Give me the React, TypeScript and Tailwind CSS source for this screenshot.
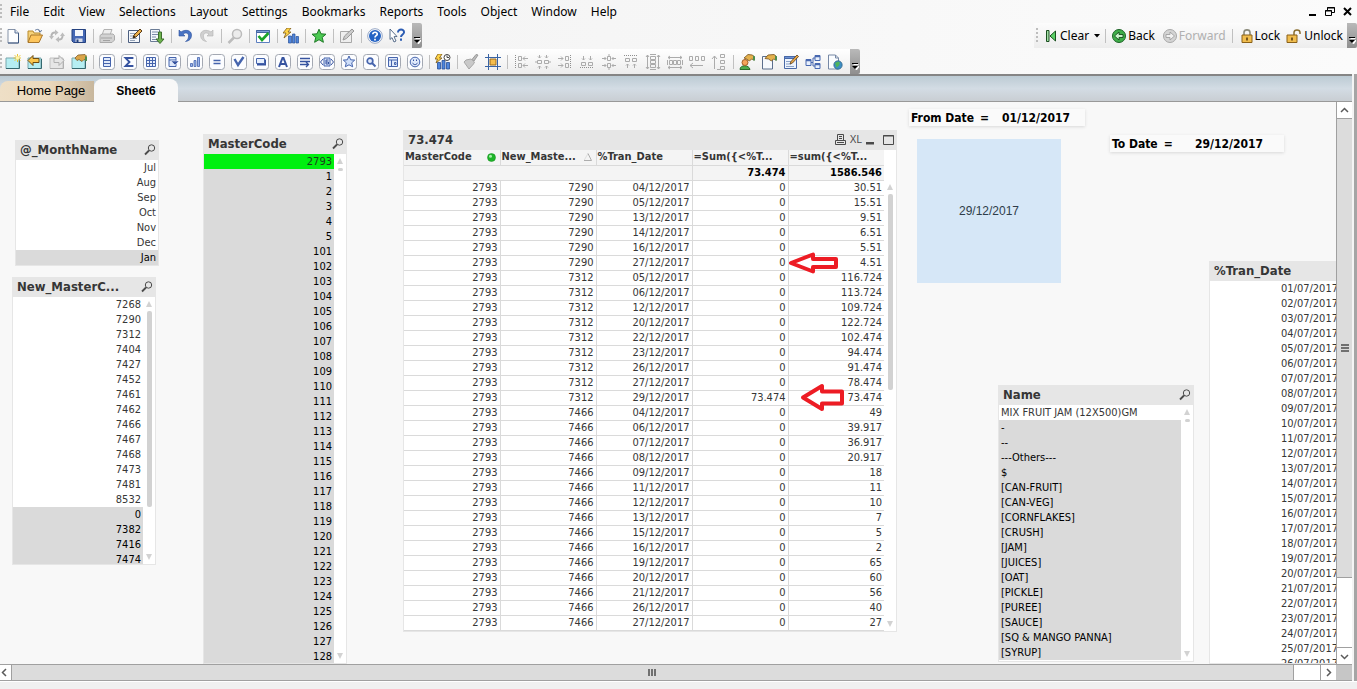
import type { ReactNode } from "react"

const menuItems = [
  "File",
  "Edit",
  "View",
  "Selections",
  "Layout",
  "Settings",
  "Bookmarks",
  "Reports",
  "Tools",
  "Object",
  "Window",
  "Help",
]

const mainGroups = [
  ["new", "open", "refresh", "save"],
  ["print"],
  ["script", "reload"],
  ["undo", "redo"],
  ["search"],
  ["current"],
  ["quickchart"],
  ["star"],
  ["note"],
  ["help", "whatsthis"],
]

const designGroups = [
  ["addsheet", "sheetleft", "sheetright", "sheetprops"],
  [
    "listbox",
    "statistics",
    "table",
    "multibox",
    "chart",
    "input",
    "selections",
    "button",
    "text",
    "line",
    "slider",
    "bookmark",
    "searchobject",
    "container",
    "custom",
  ],
  ["timechart"],
  ["brush", "grid"],
  [
    "alignleft",
    "centerh",
    "alignright",
    "alignbottom",
    "centerv",
    "aligntop",
    "spaceh",
    "spacev",
    "adjustleft",
    "adjusttop",
  ],
  ["userprefs", "docprops", "editscript", "tableviewer", "webview"],
]

const months = ["Jul", "Aug", "Sep", "Oct", "Nov", "Dec", "Jan"]

const newMasterCodes = [
  "7268", "7290", "7312", "7404", "7427", "7452", "7461", "7462", "7466",
  "7467", "7468", "7473", "7481", "8532", "0", "7382", "7416", "7474",
]

const masterCodes = [
  "2793", "1", "2", "3", "4", "5",
  ...Array.from({ length: 28 }, (_, i) => String(101 + i)),
]

const names = [
  "MIX FRUIT JAM (12X500)GM", "-", "--", "---Others---", "$", "[CAN-FRUIT]", "[CAN-VEG]", "[CORNFLAKES]",
  "[CRUSH]", "[JAM]", "[JUICES]", "[OAT]", "[PICKLE]", "[PUREE]", "[SAUCE]", "[SQ & MANGO PANNA]", "[SYRUP]",
]

const tranDates = Array.from({ length: 26 }, (_, i) => `${String(i + 1).padStart(2, "0")}/07/2017`)

const columns = ["MasterCode", "New_Maste...", "%Tran_Date", "=Sum({<%T...", "=sum({<%T..."]

const tableRows = [
  ["7290", "04", "0", "30.51"],
  ["7290", "05", "0", "15.51"],
  ["7290", "13", "0", "9.51"],
  ["7290", "14", "0", "6.51"],
  ["7290", "16", "0", "5.51"],
  ["7290", "27", "0", "4.51"],
  ["7312", "05", "0", "116.724"],
  ["7312", "06", "0", "113.724"],
  ["7312", "12", "0", "109.724"],
  ["7312", "20", "0", "122.724"],
  ["7312", "22", "0", "102.474"],
  ["7312", "23", "0", "94.474"],
  ["7312", "26", "0", "91.474"],
  ["7312", "27", "0", "78.474"],
  ["7312", "29", "73.474", "73.474"],
  ["7466", "04", "0", "49"],
  ["7466", "06", "0", "39.917"],
  ["7466", "07", "0", "36.917"],
  ["7466", "08", "0", "20.917"],
  ["7466", "09", "0", "18"],
  ["7466", "11", "0", "11"],
  ["7466", "12", "0", "10"],
  ["7466", "13", "0", "7"],
  ["7466", "15", "0", "5"],
  ["7466", "16", "0", "2"],
  ["7466", "19", "0", "65"],
  ["7466", "20", "0", "60"],
  ["7466", "21", "0", "56"],
  ["7466", "26", "0", "40"],
  ["7466", "27", "0", "27"],
]

const starPath = "M8 1.2l2 4.6 5 .4-3.8 3.2 1.2 4.9L8 11.7l-4.4 2.6 1.2-4.9L1 6.2l5-.4z"

// Blue sheet-object glyphs share the same rounded frame
function Framed({ children }: { children: ReactNode }) {
  return (
    <>
      <rect x="0.5" y="0.5" width="15" height="15" rx="3" fill="#fcfdff" stroke="#a3a8b2" />
      {children}
    </>
  )
}

function Page({ dim = false }: { dim?: boolean }) {
  return (
    <>
      <path d="M1 4h13v10.5H1z" fill={dim ? "#e6e6e6" : "#b5eef2"} stroke={dim ? "#c0c0c0" : "#7aa7ad"} />
      <path d="M1 14.5h13.5V5" fill="none" stroke={dim ? "#b0b0b0" : "#35686f"} />
    </>
  )
}

const icons: Record<string, ReactNode> = {
  new: (
    <>
      <path d="M3 1.5h7l3.500 3.500v10H3z" fill="#fdfeff" stroke="#8693a8" />
      <path d="M3 15h10.500V5" fill="none" stroke="#3c5780" />
      <path d="M10 1.500V5h3.500" fill="#dfe8f4" stroke="#5c7397" />
    </>
  ),
  open: (
    <>
      <path d="M1 14V3h5l1 2h6v3" fill="#f5d27a" stroke="#b98a2d" />
      <path d="M1 14.500L4 7h11.500L12 14.500z" fill="#fdc55c" stroke="#a8762a" />
      <path d="M8 2.500c2-2 5-1 5 1M11.500 2.500l1.700 1.700 1.500-2" fill="none" stroke="#5c7397" />
    </>
  ),
  refresh: (
    <g fill="none" stroke="#b4b4b4" strokeWidth="2">
      <path d="M2.500 9C2 5.500 4 4 7 4.500" />
      <path d="M13.500 7c.5 3.500-1.500 5-4.500 4.500" />
      <path d="M6 1.500v6l3.500-3zM10 8.500v6L6.500 11.500z" fill="#bdbdbd" stroke="none" />
      <path d="M0 8h5l-2.500 3.500zM11 8h5l-2.500-3.500z" fill="#bdbdbd" stroke="none" />
    </g>
  ),
  save: (
    <>
      <path d="M1 1.500h13.500v13H2.500L1 13z" fill="#4467b4" stroke="#25427f" />
      <path d="M4 2h8v6H4z" fill="#f3f6fb" />
      <path d="M4.500 10.500h7V14h-7z" fill="#d5dbe8" />
      <path d="M5.500 11.500h2V14h-2z" fill="#25427f" />
    </>
  ),
  print: (
    <>
      <path d="M5 1.500h8L11 7H3z" fill="#ededed" stroke="#b2b2b2" />
      <path d="M1 7.500L3 6h11l1.500 1.500V12L13 14.500H1z" fill="#d2d2d2" stroke="#aaa" />
      <path d="M2 10h11M4 12.500h7" stroke="#a2a2a2" />
    </>
  ),
  script: (
    <>
      <path d="M1.500 2.500h11v12h-11z" fill="#f4f7fb" stroke="#4c5f80" />
      <path d="M3 5.500h6M3 8h4M3 10.500h7M3 12.500h5" stroke="#96a4b8" />
      <path d="M6 10l1-3 6-6 2 2-6 6z" fill="#e8ad4a" stroke="#5a3c18" />
      <path d="M6 10l1-2.500 1.500 1.500z" fill="#222" />
    </>
  ),
  reload: (
    <>
      <path d="M1.500 1.500h9v12h-9z" fill="#f4f7fb" stroke="#6b7c96" />
      <path d="M3 4h6M3 6.500h6M3 9h4M3 11.500h5" stroke="#7a8ba8" />
      <path d="M9.500 4h3v7h2.500l-4 4.500L7 11h2.500z" fill="#6db34e" stroke="#3d6e2d" />
    </>
  ),
  undo: <path d="M2 2v6h6L6 6c3-2 6-1 5.500 3-.3 2-1.500 3.500-3 4.500 4-.5 6-3 6-6.500C14.500 2 8 1 4 4z" fill="#4a74c4" stroke="#2c519b" strokeWidth="0.600" />,
  redo: <path d="M14 2v6H8l2-2c-3-2-6-1-5.500 3 .3 2 1.500 3.500 3 4.500-4-.5-6-3-6-6.500C1.500 2 8 1 12 4z" fill="#d0d0d0" stroke="#b4b4b4" strokeWidth="0.600" />,
  search: (
    <>
      <circle cx="10" cy="6" r="4.500" fill="#ececec" stroke="#bbb" strokeWidth="1.500" />
      <path d="M7 9.500L1.500 15" stroke="#bcbcbc" strokeWidth="2.500" />
    </>
  ),
  current: (
    <>
      <path d="M1.500 2.500h13v12h-13z" fill="#fff" stroke="#5c7fc0" />
      <path d="M1.500 2.500h13v2h-13z" fill="#7ea0d8" stroke="#42659f" />
      <path d="M3.500 8l3.500 4 6.500-7" fill="none" stroke="#19a32a" strokeWidth="2.600" />
    </>
  ),
  quickchart: (
    <>
      <path d="M5.500 8h3v7h-3zM9.500 6h2.500v9H9.500zM13 8.500h2.500V15H13z" fill="#4f86dd" stroke="#264f97" strokeWidth="0.700" />
      <path d="M4 0h4L5 4h3L1 10l2-5H0z" fill="#ffd447" stroke="#7d5a18" strokeWidth="0.800" />
    </>
  ),
  star: <path d={starPath} fill="#4cc952" stroke="#207a28" />,
  note: (
    <>
      <path d="M1.500 3.500h11v11h-11z" fill="#eee" stroke="#a8a8a8" />
      <path d="M4 12l1.500-4L13 1l2 2-7.500 7.500z" fill="#ccc" stroke="#999" />
    </>
  ),
  help: (
    <>
      <circle cx="8" cy="8" r="7.300" fill="#fff" stroke="#7b91b8" strokeWidth="0.800" />
      <circle cx="8" cy="8" r="6" fill="#2463c4" />
      <path d="M5.800 6.200C6 3.500 10.500 3.700 10.200 6.300 10 7.700 8 7.800 8 9.500M8 10.800v1.700" fill="none" stroke="#fff" strokeWidth="1.700" />
    </>
  ),
  whatsthis: (
    <>
      <path d="M1 1l7 7.500-3 .2 2 4.300-2 1-2-4.400L1 11.500z" fill="#fff" stroke="#48607f" strokeWidth="0.900" />
      <path d="M9 4.500C9 .5 15.200.7 15 4.500c-.2 2-3 2-3 4.500M12 10.500v2.300" fill="none" stroke="#2d5db3" strokeWidth="2" />
    </>
  ),
  addsheet: (
    <>
      <Page />
      <path d="M12.500 0v8M8.500 4h8M9.700 1.200l5.600 5.600M15.300 1.200L9.700 6.800" stroke="#ecc633" />
      <circle cx="12.500" cy="4" r="1.700" fill="#fff5a8" />
    </>
  ),
  sheetleft: (
    <>
      <Page />
      <path d="M1 6.500l5-5v3h6v4H6v3z" fill="#fbc64c" stroke="#6e4c12" />
    </>
  ),
  sheetright: (
    <>
      <Page dim />
      <path d="M15 6.500l-5-5v3H5v4h5v3z" fill="#e6e6e6" stroke="#b0b0b0" />
    </>
  ),
  sheetprops: (
    <>
      <Page />
      <path d="M4 4l3-3 7-.5 2 2v4l-3-1-2 2-3-2-2 1z" fill="#dba549" stroke="#74501c" strokeWidth="0.700" />
      <path d="M14 2l2 1v4h-2z" fill="#4d8d50" />
    </>
  ),
  listbox: <Framed><path d="M4.500 3.500h7v9h-7zM4.500 6.500h7M4.500 9.500h7" fill="#dfe9fb" stroke="#4564ad" /></Framed>,
  statistics: <Framed><path d="M11.500 5V4H4.500l4 4-4 4h7v-1" fill="none" stroke="#3653a0" strokeWidth="1.800" /></Framed>,
  table: <Framed><path d="M3.500 3.500h9v9h-9zM3.500 6.500h9M3.500 9.500h9M6.500 3.500v9M9.500 3.500v9" fill="#e8effc" stroke="#4564ad" /></Framed>,
  multibox: (
    <Framed>
      <path d="M4 3.500h7v9H4zM4 6h7" fill="#dfe9fb" stroke="#4564ad" />
      <path d="M6 7h8l-4 4z" fill="#3653a0" stroke="#fff" strokeWidth="0.500" />
    </Framed>
  ),
  chart: <Framed><path d="M3.500 9.500h2v3h-2zM7 6.500h2v6H7zM10.500 3.500h2v9h-2z" fill="#9ab5ec" stroke="#4564ad" strokeWidth="0.800" /></Framed>,
  input: <Framed><path d="M4.500 6.500h7M4.500 9.500h7" stroke="#4564ad" strokeWidth="1.600" /></Framed>,
  selections: <Framed><path d="M3.500 5l3.500 6 5.500-8" fill="none" stroke="#4564ad" strokeWidth="2.400" /></Framed>,
  button: (
    <Framed>
      <path d="M4 5.500h9v6H4z" fill="#3653a0" />
      <path d="M3.500 4.500h8v5h-8z" fill="#e6effd" stroke="#4564ad" />
    </Framed>
  ),
  text: <Framed><path d="M4 13L7.500 4h1L12 13M5.500 10h5" fill="none" stroke="#3653a0" strokeWidth="2" /></Framed>,
  line: <Framed><path d="M3 4.500h10M3 7.500h10M3 10.500h8M9 8l2.500 2.500L9 13" fill="none" stroke="#3653a0" strokeWidth="1.300" /></Framed>,
  slider: (
    <Framed>
      <path d="M5 4h6v8H5z" fill="#d9e5fb" stroke="#4564ad" />
      <path d="M4 5L1.500 8 4 11M12 5l2.500 3-2.500 3M9.500 6H7v4h2.500V8H7" fill="none" stroke="#3653a0" />
    </Framed>
  ),
  bookmark: <Framed><path d="M8 2l1.700 3.800 4 .3-3 2.700 1 4L8 10.800l-3.700 2 1-4-3-2.700 4-.3z" fill="#cfdffa" stroke="#4564ad" /></Framed>,
  searchobject: (
    <Framed>
      <circle cx="7" cy="7" r="2.800" fill="#e3ecfc" stroke="#4564ad" strokeWidth="1.700" />
      <path d="M9 9l3.500 3.500" stroke="#4564ad" strokeWidth="2" />
    </Framed>
  ),
  container: <Framed><path d="M3.500 3.500h9v9h-9zM3.500 6h9M6.500 6v6.500M9.500 8.500h1.500v2H9.500z" fill="#dfe9fb" stroke="#4564ad" /></Framed>,
  custom: (
    <Framed>
      <circle cx="8" cy="8" r="4.800" fill="#dfe9fb" stroke="#4564ad" />
      <path d="M6.500 5.500v1.500M9.500 5.500v1.500M5.500 8.800c1 2.400 4 2.400 5 0" fill="none" stroke="#3653a0" />
    </Framed>
  ),
  timechart: (
    <>
      <path d="M2.500 8.500h3V15h-3zM7 6.500h3V15H7zM11.500 8.500h3V15h-3z" fill="#4f86dd" stroke="#264f97" strokeWidth="0.800" />
      <path d="M3 0h4L4.500 4H7L1 9l1.500-4H0z" fill="#ffd447" stroke="#7d5a18" strokeWidth="0.800" />
      <circle cx="12" cy="3.500" r="3" fill="#fff" stroke="#444" />
      <path d="M12 1.500v2h2" fill="none" stroke="#444" />
    </>
  ),
  brush: (
    <>
      <path d="M15 1l-4 6-2-1.500 4-5z" fill="#bdbdbd" stroke="#9a9a9a" />
      <path d="M3 6l5-1 3.500 3-1 2L6 15 1 8z" fill="#c9c9c9" stroke="#a8a8a8" />
    </>
  ),
  grid: (
    <>
      <path d="M3.500 0v16M12.500 0v16M0 3.500h16M0 12.500h16" stroke="#3863a4" />
      <path d="M5 5h6v6H5z" fill="#f5bd4d" stroke="#9d6d1e" />
    </>
  ),
  alignleft: <Align d="M5.500 2.500h3v4h-3zM5.500 9.500h3v4h-3zM10 4.500h5M12 2.500l-2 2 2 2M10 11.500h5M12 9.500l-2 2 2 2" dots="M2.500 1v14" />,
  centerh: <Align d="M2.500 6.500h4v3h-4zM9.500 6.500h4v3h-4zM4.500 1v3M3 2.500L4.500 4 6 2.500M11.500 1v3M10 2.500L11.500 4 13 2.500M4.500 15v-3M3 13.500L4.500 12 6 13.500M11.500 15v-3M10 13.500l1.500-1.500 1.500 1.500M0 8h2M14 8h2" />,
  alignright: <Align d="M8.500 2.500h3v4h-3zM8.500 9.500h3v4h-3zM1 4.500h5M4 2.500l2 2-2 2M1 11.500h5M4 9.500l2 2-2 2" dots="M13.500 1v14" />,
  alignbottom: <Align d="M2.500 8.500h4v3h-4zM9.500 8.500h4v3h-4zM4.500 2v4M3 4.500L4.500 6 6 4.500M11.500 2v4M10 4.500L11.500 6 13 4.500" dots="M1 13.500h14" />,
  centerv: <Align d="M6.500 2.500h3v4h-3zM6.500 9.500h3v4h-3zM1 4.500h4M3.500 3L5 4.500 3.500 6M15 4.500h-4M12.500 3L11 4.500 12.500 6M1 11.500h4M3.500 10L5 11.500 3.500 13M15 11.500h-4M12.500 10L11 11.500l1.500 1.500M8 0v2M8 14v2" />,
  aligntop: <Align d="M2.500 4.500h4v3h-4zM9.500 4.500h4v3h-4zM4.500 14v-4M3 11.500L4.500 10 6 11.500M11.500 14v-4M10 11.500l1.500-1.500 1.500 1.500" dots="M1 1.500h14" />,
  spaceh: <Align d="M5.500 2.500h5v3h-5zM5.500 6.500h5v3h-5zM5.500 10.500h5v3h-5zM2.500 1v14M1 3l1.500-2L4 3M1 13l1.500 2L4 13M13.500 1v14M12 3l1.500-2L15 3M12 13l1.500 2 1.500-2M5 .5h6M5 15.500h6" />,
  spacev: <Align d="M2.500 6.500h3v4h-3zM6.500 6.500h3v4h-3zM10.500 6.500h3v4h-3zM1 3.500h14M3 2L1 3.500 3 5M13 2l2 1.500L13 5M1 13.500h14M3 12l-2 1.500L3 15M13 12l2 1.500-2 1.500M.5 6v5M15.500 6v5" />,
  adjustleft: <Align d="M.5 2.500h3v4h-3zM6.500 2.500h3v4h-3zM12.500 2.500h3v4h-3zM1 11.500h13M4 9l-3 2.500L4 14" />,
  adjusttop: <Align d="M9.500.5h4v3h-4zM9.500 6.500h4v3h-4zM9.500 12.500h4v3h-4zM3.500 2v13M1 5l2.500-3L6 5M6 15.500h3" />,
  userprefs: (
    <>
      <path d="M1 15.500c0-5 9-5 10 0z" fill="#4fab4e" stroke="#2a6a2b" />
      <circle cx="6" cy="8.500" r="3" fill="#f5a35b" stroke="#a35f26" />
      <path d="M5 4l4-3.500 4.500.5 2 2v3l-3-1-2 2-3-2z" fill="#e5b14d" stroke="#74501c" strokeWidth="0.800" />
      <path d="M14 1.500l2 1v4h-2z" fill="#4d8d50" />
    </>
  ),
  docprops: (
    <>
      <path d="M1.500 2.500h10v12.500h-10z" fill="#f6f9fd" stroke="#5b6e8c" />
      <path d="M4 4.500l3-3.500 6-.5 2.500 2v3.500l-3-1-2 2-3-2z" fill="#e5b14d" stroke="#74501c" strokeWidth="0.800" />
      <path d="M14 1.500l2 1v4h-2z" fill="#4d8d50" />
    </>
  ),
  editscript: (
    <>
      <path d="M1.500 2.500h12v12h-12z" fill="#eef4fd" stroke="#4868a6" />
      <path d="M1.500 2.500h12v2h-12z" fill="#6d92d4" stroke="#4868a6" />
      <path d="M3 7.500h6M3 10h5M3 12.500h8" stroke="#8ba2c8" />
      <path d="M7 10l1-2.500L14 1l1.500 1.500-6 6.500z" fill="#ecaa48" stroke="#5a3c18" strokeWidth="0.800" />
    </>
  ),
  tableviewer: (
    <>
      <path d="M1 5.500h5v6H1zM10 1.500h5v5h-5zM10 9.500h5v5h-5z" fill="#e8f0fd" stroke="#4868b0" />
      <path d="M1 6.500h5M10 2.500h5M10 10.500h5" stroke="#4868b0" strokeWidth="1.500" />
      <path d="M6 8.500h2V4h2M8 8.500V12h2" fill="none" stroke="#4868b0" />
    </>
  ),
  webview: (
    <>
      <path d="M1.500 1h7l3 3v11h-10z" fill="#fbfdff" stroke="#7688a5" />
      <path d="M8.500 1v3h3" fill="none" stroke="#7688a5" />
      <circle cx="11" cy="11" r="4.200" fill="#3f8fc4" stroke="#2a5d80" strokeWidth="0.700" />
      <path d="M8 9l3-1.500 2 1-1 3-2.500 2z" fill="#4fb45c" />
    </>
  ),
}

function Align({ d, dots }: { d: string; dots?: string }) {
  return (
    <g fill="none" stroke="#ababab">
      <path d={d} />
      {dots && <path d={dots} strokeDasharray="1 1" stroke="#8f8f8f" />}
    </g>
  )
}

function Icon({ name }: { name: string }) {
  return (
    <svg width="16" height="16" viewBox="0 0 16 16">
      {icons[name]}
    </svg>
  )
}

function Overflow() {
  return (
    <button
      aria-label="Toolbar options"
      className="w-[10px] self-stretch shrink-0 bg-gradient-to-b from-[#b9b9b9] to-[#8f8f8f] flex items-end justify-center pb-1 rounded-r-xs"
    >
      <svg width="7" height="7" viewBox="0 0 7 7">
        <path d="M1.500 1.500h5M2 3.500h5L4.500 7z" fill="#fff" stroke="#fff" />
        <path d="M0 .5h6" stroke="#000" />
        <path d="M0 3h6L3 6z" />
      </svg>
    </button>
  )
}

function Grip() {
  return <div className="w-0.5 h-4 shrink-0 bg-[repeating-linear-gradient(#bdbdbd_0_2px,transparent_2px_4px)]" />
}

function Toolbar({ groups }: { groups: string[][] }) {
  return (
    <div className="flex items-center h-[25px] bg-gradient-to-b from-white to-[#ededed] shrink-0">
      <Grip />
      {groups.map((group, i) => (
        <div key={i} className="flex items-center">
          {i > 0 && (
            <div className="w-[6px] flex justify-center">
              <div className="w-px h-[14px] bg-[#c0c0c0]" />
            </div>
          )}
          {group.map((name) => (
            <button key={name} aria-label={name} className="w-[22px] h-[22px] flex items-center justify-center">
              <Icon name={name} />
            </button>
          ))}
        </div>
      ))}
      <div className="w-1" />
      <Overflow />
    </div>
  )
}

function NavToolbar() {
  return (
    <div className="flex items-center h-[25px] bg-gradient-to-b from-[#fcfcfc] to-[#ededed] shrink-0 text-[12px] pl-0.5">
      <Grip />
      <button className="flex items-center gap-0.5 pl-1.5">
        <svg width="14" height="16" viewBox="0 0 14 16">
          <path d="M2.500 2.500h2.500v11H2.500z" fill="#a4e0a7" stroke="#1b4f20" />
          <path d="M11.500 3v10L6 8z" fill="#5bd066" stroke="#1b4f20" />
        </svg>
        Clear
        <svg width="8" height="4" viewBox="0 0 8 4" className="ml-0.5">
          <path d="M1 0h6L4 3.500z" />
        </svg>
      </button>
      <div className="w-px h-[14px] bg-[#c0c0c0] ml-1 mr-0.5" />
      <button className="flex items-center gap-0.5 px-1">
        <svg width="14" height="14" viewBox="0 0 14 14">
          <circle cx="7" cy="7" r="6.500" fill="#3fae49" stroke="#1d6226" />
          <path d="M2.500 7L7 3v2.500h4v3H7V11z" fill="#c9f4cb" stroke="#174d1d" strokeWidth="0.900" />
        </svg>
        Back
      </button>
      <button className="flex items-center gap-0.5 px-1 text-[#b0b0b0]" disabled>
        <svg width="14" height="14" viewBox="0 0 14 14">
          <circle cx="7" cy="7" r="6.500" fill="#d4d4d4" stroke="#a8a8a8" />
          <path d="M11.500 7L7 3v2.500H3v3h4V11z" fill="#f2f2f2" stroke="#a0a0a0" strokeWidth="0.900" />
        </svg>
        Forward
      </button>
      <div className="w-px h-[14px] bg-[#c0c0c0] ml-0.5 mr-1" />
      <button className="flex items-center gap-0.5 px-1">
        <svg width="12" height="14" viewBox="0 0 12 14">
          <path d="M3 6V3.500c0-3.500 6-3.500 6 0V6" fill="none" stroke="#8a8a7a" strokeWidth="1.600" />
          <path d="M1 6h10v7.500H1z" fill="#f0bd4e" stroke="#8a6118" />
          <path d="M6 8.500v3" stroke="#5a3c10" strokeWidth="1.600" />
        </svg>
        Lock
      </button>
      <button className="flex items-center gap-0.5 pl-0.5 pr-1">
        <svg width="16" height="14" viewBox="0 0 16 14">
          <path d="M8 6V3.500c0-3.500 6-3.500 6 0V5" fill="none" stroke="#8a6f30" strokeWidth="1.500" />
          <path d="M1 6h10v7.500H1z" fill="#f0bd4e" stroke="#8a6118" />
          <path d="M6 8.500v3" stroke="#5a3c10" strokeWidth="1.600" />
        </svg>
        Unlock
      </button>
      <Overflow />
    </div>
  )
}

function Magnifier() {
  return (
    <svg width="12" height="12" viewBox="0 0 12 12" fill="none" stroke="#4a4a4a">
      <circle cx="7.500" cy="4" r="3.200" />
      <path d="M5 6.500L1 10.500" strokeWidth="1.800" />
    </svg>
  )
}

function Caption({ title, children }: { title: string; children?: ReactNode }) {
  return (
    <div className="h-[19px] shrink-0 bg-[#e6e6e6] flex items-center justify-between pl-1 pr-0.5 pb-0.5 text-[13px] text-[#363636]">
      <span className="font-bold whitespace-nowrap">{title}</span>
      {children}
    </div>
  )
}

function SlimScroll({ thumb }: { thumb: string }) {
  return (
    <div className="w-3 shrink-0 bg-white flex flex-col items-center justify-between py-1">
      <div className="flex flex-col items-center gap-1 flex-1 min-h-0">
        <svg width="6" height="6" viewBox="0 0 6 6" fill="#d2d2d2" className="shrink-0">
          <path d="M3 0l3 6H0z" />
        </svg>
        <div className={`w-[5px] shrink-0 rounded-xs bg-[#d2d2d2] ${thumb}`} />
      </div>
      <svg width="6" height="6" viewBox="0 0 6 6" fill="#d2d2d2" className="shrink-0">
        <path d="M0 0h6L3 6z" />
      </svg>
    </div>
  )
}

type ListBoxProps = {
  title: string
  items: string[]
  place: string
  selected?: number
  excludedFrom?: number
  align?: string
  thumb?: string
  searchable?: boolean
}

function ListBox({
  title,
  items,
  place,
  selected = -1,
  excludedFrom = 1000,
  align = "text-right",
  thumb,
  searchable = true,
}: ListBoxProps) {
  return (
    <section className={`absolute flex flex-col overflow-hidden border border-[#e6e6e6] bg-white ${place}`}>
      <Caption title={title}>{searchable && <Magnifier />}</Caption>
      <div className="flex flex-1 min-h-0">
        <ul className={`flex-1 overflow-hidden ${align}`}>
          {items.map((item, i) => (
            <li
              key={i}
              className={`h-[15px] leading-[15px] px-0.5 whitespace-nowrap ${
                i === selected
                  ? "bg-[#00f010] text-[#1c3d1c]"
                  : i >= excludedFrom
                    ? "bg-[#dadada] text-black"
                    : "text-[#363636]"
              }`}
            >
              {item}
            </li>
          ))}
        </ul>
        {thumb && <SlimScroll thumb={thumb} />}
      </div>
    </section>
  )
}

function StraightTable() {
  return (
    <section className="absolute left-[403px] top-[28px] w-[494px] border border-[#e6e6e6] bg-white">
      <Caption title="73.474">
        <div className="flex items-center gap-1 text-[#4a4a4a]">
          <svg width="11" height="11" viewBox="0 0 11 11" fill="none" stroke="currentColor">
            <path d="M2.500 6V.5h6V6M4 2.500h3M4 4.500h3M.5 6.500h10v4H.5zM2 8.500h7" />
          </svg>
          <span className="font-['Liberation_Sans',Arial,sans-serif] text-[10px]">XL</span>
          <svg width="9" height="11" viewBox="0 0 9 11">
            <path d="M0 8h8v2.500H0z" fill="currentColor" />
          </svg>
          <svg width="11" height="11" viewBox="0 0 11 11" className="ml-1" fill="none" stroke="currentColor">
            <path d="M.5 1.500h10v9H.5zM0 2h11" />
          </svg>
        </div>
      </Caption>
      <div className="flex">
        <table className="w-[480px] table-fixed border-collapse">
          <thead>
            <tr className="h-[15px] bg-[#f4f4f4] text-[#363636]">
              {columns.map((column, i) => (
                <th
                  key={column}
                  className="h-[15px] p-0 pl-px leading-[14px] border-b border-r border-[#dadada] last:border-r-0 text-left font-bold"
                >
                  <span className="flex items-center justify-between pr-1">
                    {column}
                    {i === 0 && (
                      <svg width="9" height="9" viewBox="0 0 9 9">
                        <circle cx="4.500" cy="4.500" r="4" fill="#1fb52a" stroke="#148a1d" strokeWidth="0.500" />
                        <circle cx="3.500" cy="3.200" r="1.500" fill="#a6f0aa" />
                      </svg>
                    )}
                    {i === 1 && (
                      <svg width="8" height="8" viewBox="0 0 8 8" fill="none">
                        <path d="M0 7.500L4 .5" stroke="#dedede" />
                        <path d="M4 .5l3.500 7H0" stroke="#adadad" />
                      </svg>
                    )}
                  </span>
                </th>
              ))}
            </tr>
            <tr className="h-[15px] bg-[#f4f4f4] text-black text-right font-bold">
              <td colSpan={3} className="h-[15px] p-0 border-b border-r border-[#dadada]" />
              <td className="h-[15px] p-0 pr-0.5 leading-[14px] border-b border-r border-[#dadada]">73.474</td>
              <td className="h-[15px] p-0 pr-0.5 leading-[14px] border-b border-[#dadada]">1586.546</td>
            </tr>
          </thead>
          <tbody>
            {tableRows.map(([code, day, sum, running], i) => (
              <tr key={i} className="text-[#363636] text-right">
                {["2793", code, `${day}/12/2017`, sum, running].map((value, j) => (
                  <td
                    key={j}
                    className="h-[15px] p-0 pr-0.5 leading-[14px] border-b border-r border-[#dadada] last:border-r-0"
                  >
                    {value}
                  </td>
                ))}
              </tr>
            ))}
          </tbody>
        </table>
        <div className="flex flex-col">
          <div className="h-[30px]" />
          <div className="flex flex-1">
            <SlimScroll thumb="h-[196px]" />
          </div>
        </div>
      </div>
    </section>
  )
}

function DateLabel({ label, value, place }: { label: string; value: string; place: string }) {
  return (
    <div className={`absolute flex items-center h-[17px] pl-0.5 bg-[#fafafa] shadow-[0_1px_3px_#d8d8d8] text-[12px] font-bold text-black ${place}`}>
      <span>{label}</span>
      <span className="ml-1.5">=</span>
      <span className="ml-auto">{value}</span>
    </div>
  )
}

function Chevron({ d }: { d: string }) {
  return (
    <svg width="9" height="9" viewBox="0 0 9 9" fill="none" stroke="#5a5a5a" strokeWidth="1.500">
      <path d={d} />
    </svg>
  )
}

function MenuBar() {
  return (
    <header className="flex items-center justify-between h-[23px] shrink-0 pr-1">
      <nav className="flex items-center text-[12px]">
        <Grip />
        <div className="flex pl-2 gap-3.5">
          {menuItems.map((item) => (
            <button key={item}>{item}</button>
          ))}
        </div>
      </nav>
      <div className="flex items-center gap-2">
        <button aria-label="Minimize">
          <svg width="8" height="10" viewBox="0 0 8 10">
            <path d="M0 7h7v2H0z" />
          </svg>
        </button>
        <button aria-label="Restore">
          <svg width="10" height="10" viewBox="0 0 10 10" fill="none" stroke="#000">
            <path d="M2.500 4V.5h7v5H7M2 1h8M.5 3.500h6v5h-6zM0 4h7" />
          </svg>
        </button>
        <button aria-label="Close">
          <svg width="10" height="10" viewBox="0 0 10 10" stroke="#000" strokeWidth="2">
            <path d="M1 1l7 7M8 1L1 8" />
          </svg>
        </button>
      </div>
    </header>
  )
}

function TabStrip() {
  return (
    <div className="flex items-end h-7 shrink-0 border-t-2 border-t-[#858585] border-b border-b-[#999] bg-gradient-to-b from-[#bccbd4] via-[#d3dce4] to-[#c9ced3] font-['Liberation_Sans',Arial,sans-serif]">
      <button className="h-[20px] w-[94px] pl-2 rounded-tl-lg bg-gradient-to-r from-[#eedfc6] via-[#ecd9bd] to-[#c8b79d] text-[13px] text-black">
        Home Page
      </button>
      <button className="h-[23px] w-[84px] -mb-px rounded-t-lg bg-[#f8f8f8] text-[12px] font-bold text-black">
        Sheet6
      </button>
    </div>
  )
}

export default function App() {
  return (
    <div className="h-screen flex flex-col overflow-hidden bg-gradient-to-r from-[#f2f2f2] to-[#fbfbfb] text-black font-['Noto_Sans','Open_Sans',sans-serif]">
      <MenuBar />
      <div className="flex justify-between shrink-0">
        <Toolbar groups={mainGroups} />
        <NavToolbar />
      </div>
      <div className="flex shrink-0 pt-px">
        <Toolbar groups={designGroups} />
      </div>

      <div className="flex-1 min-h-0 flex flex-col border-r-3 border-[#a5a5a5] font-['DejaVu_Sans_Condensed','DejaVu_Sans',sans-serif] text-[11px]">
        <div className="flex-1 min-h-0 flex flex-col border-r-2 border-[#f4f4f4]">
          <TabStrip />
          <div className="flex flex-1 min-h-0">
            <main className="relative flex-1 overflow-hidden bg-[#f8f8f8]">
              <ListBox title="@_MonthName" items={months} place="left-[15px] top-[38px] w-[144px]" excludedFrom={6} />
              <ListBox
                title="New_MasterC..."
                items={newMasterCodes}
                place="left-[12px] top-[175px] w-[144px] h-[288px]"
                excludedFrom={14}
                thumb="h-[196px]"
              />
              <ListBox
                title="MasterCode"
                items={masterCodes}
                place="left-[203px] top-[32px] bottom-0 w-[144px]"
                selected={0}
                excludedFrom={1}
                thumb="h-[3px]"
              />
              <StraightTable />
              {/* Marker arrows over the two rows in question */}
              <svg width="52" height="24" viewBox="0 0 52 24" className="absolute left-[787px] top-[149px]">
                <path d="M4 12L26 3.500V8h23v8H26v4.500z" fill="#fff" stroke="#ed1c24" strokeWidth="4" strokeLinejoin="round" />
              </svg>
              <svg width="46" height="30" viewBox="0 0 46 30" className="absolute left-[799px] top-[281px]">
                <path d="M4 14.500L23 3v5.500h20v12H23V26z" fill="#fff" stroke="#ed1c24" strokeWidth="4" strokeLinejoin="round" />
              </svg>
              <DateLabel label="From Date" value="01/12/2017" place="left-[909px] top-[7px] w-[176px] pr-[15px]" />
              <DateLabel label="To Date" value="29/12/2017" place="left-[1110px] top-[33px] w-[174px] pr-[21px]" />
              <div className="absolute left-[917px] top-[37px] w-[144px] h-[144px] bg-[#d6e7f7] flex items-center justify-center font-['Liberation_Sans',Arial,sans-serif] text-[12px] text-[#2f3d4a]">
                29/12/2017
              </div>
              <ListBox
                title="%Tran_Date"
                items={tranDates}
                place="left-[1209px] top-[159px] bottom-0 w-[144px]"
                thumb="h-[196px]"
                searchable={false}
              />
              <ListBox
                title="Name"
                items={names}
                place="left-[998px] top-[283px] w-[196px] h-[277px]"
                excludedFrom={1}
                align="text-left"
                thumb="h-[3px]"
              />
            </main>
            <div className="w-4 shrink-0 flex flex-col border-l border-[#a0a0a0] bg-white">
              <button aria-label="Scroll up" className="h-[17px] shrink-0 flex items-center justify-center border-b border-[#a0a0a0]">
                <Chevron d="M1 6l3.500-3.500L8 6" />
              </button>
              <div className="flex-1 flex flex-col">
                <div className="h-[87%] bg-[#dcdcdc] border-b border-[#a0a0a0] flex flex-col items-center justify-center gap-px">
                  <div className="w-2 h-0.5 bg-[#707070]" />
                  <div className="w-2 h-0.5 bg-[#707070]" />
                  <div className="w-2 h-0.5 bg-[#707070]" />
                </div>
              </div>
              <button aria-label="Scroll down" className="h-[17px] shrink-0 flex items-center justify-center border-t border-[#a0a0a0]">
                <Chevron d="M1 3l3.500 3.500L8 3" />
              </button>
            </div>
          </div>
          <div className="flex h-[17px] shrink-0 border-y border-[#a0a0a0] bg-white">
            <button aria-label="Scroll left" className="w-3 shrink-0 flex items-center border-r border-[#a0a0a0]">
              <Chevron d="M6 1L2.500 4.500 6 8" />
            </button>
            <div className="flex-1 flex">
              <div className="w-[98%] bg-[#dcdcdc] border-r border-[#a0a0a0] flex items-center justify-center gap-px">
                <div className="w-0.5 h-[7px] bg-[#707070]" />
                <div className="w-0.5 h-[7px] bg-[#707070]" />
                <div className="w-0.5 h-[7px] bg-[#707070]" />
              </div>
            </div>
            <button aria-label="Scroll right" className="w-4 shrink-0 flex items-center justify-center border-l border-[#a0a0a0]">
              <Chevron d="M3 1l3.500 3.500L3 8" />
            </button>
            <div className="w-4 shrink-0 bg-[#c6c6c6]" />
          </div>
        </div>
      </div>
      <div className="h-2 shrink-0 bg-[#f0f0f0] border-t border-white" />
    </div>
  )
}
